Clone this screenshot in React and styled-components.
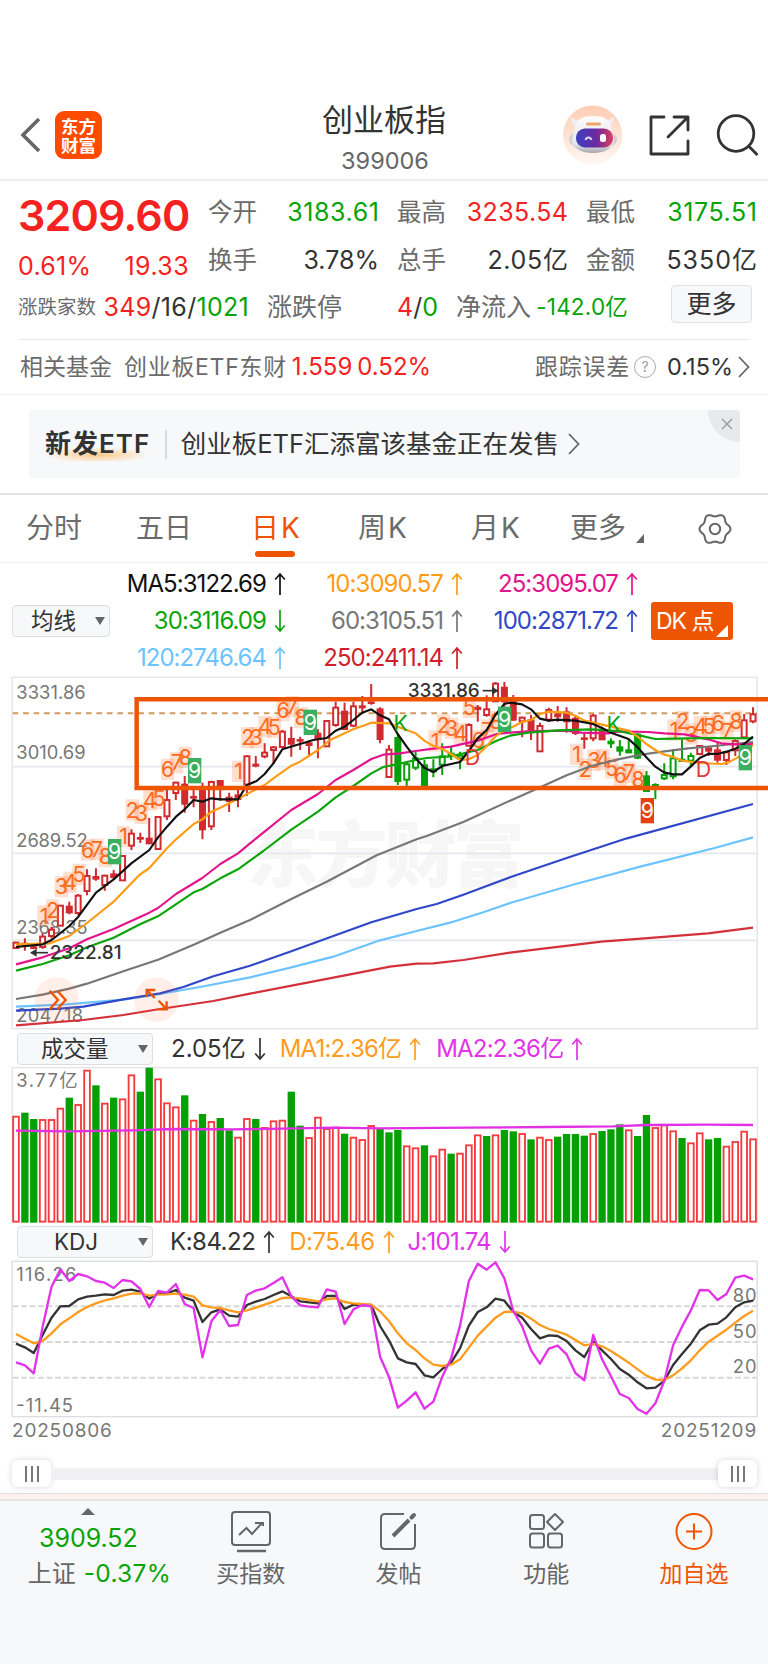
import React, { Component } from 'react';
import styled, { createGlobalStyle } from 'styled-components';

const GlobalStyle = createGlobalStyle`
  * { box-sizing: border-box; }
  html, body { margin: 0; padding: 0; background: #fff; }
  body {
    width: 768px;
    overflow-x: hidden;
    font-family: Inter, 'Noto Sans CJK SC', sans-serif;
    font-kerning: normal;
    color: #333;
  }
`;

const red = '#f62222';
const green = '#07a407';
const dark = '#333';
const grey = '#6b6b6b';
const orange = '#ee5503';

const Page = styled.div`
  width: 768px;
  height: 1664px;
  display: flex;
  flex-direction: column;
  overflow: hidden;
  background: #fff;
`;

const Text = styled.span`
  font-size: ${p => p.$size || 25}px;
  color: ${p => p.$color || dark};
  font-weight: ${p => p.$weight || 400};
  letter-spacing: ${p => p.$ls || 0}px;
  margin-left: ${p => p.$left || 0}px;
  margin-right: ${p => p.$right || 0}px;
  white-space: nowrap;
`;

/* header */
const Header = styled.header`
  height: 181px;
  padding: 74px 9px 0 20px;
  border-bottom: 2px solid #ededed;
  display: flex;
  justify-content: space-between;
`;

const HeaderSide = styled.div`
  width: 206px;
  height: 105px;
  padding-top: 17px;
  display: flex;
  align-items: center;
  justify-content: ${p => (p.$end ? 'flex-end' : 'flex-start')};
  gap: ${p => p.$gap}px;
`;

const Logo = styled.div`
  width: 47px;
  height: 48px;
  border-radius: 9px;
  background: #ff4a00;
  color: #fff;
  display: flex;
  flex-direction: column;
  align-items: center;
  justify-content: center;
  font-family: 'Noto Sans CJK SC', sans-serif;
  font-size: 17.5px;
  font-weight: 700;
  line-height: 19.5px;
`;

const TitleBlock = styled.div`
  display: flex;
  flex-direction: column;
  align-items: center;
  padding-top: 25px;
  line-height: 41px;
  margin-left: -11px;
`;

/* quote */
const Quote = styled.section`
  height: 158px;
  padding: 7px 0 0 19px;
`;

const QuoteGrid = styled.div`
  display: grid;
  grid-template-columns: repeat(4, 170px);
  grid-template-rows: 48px 48px;
  column-gap: 19px;
  line-height: 48px;
`;

const Price = styled.div`
  grid-row: span 2;
  height: 96px;
  margin-left: -1px;
`;

const PriceNow = styled.div`
  height: 54px;
  line-height: 54px;
`;

const Pair = styled.div`
  display: flex;
  justify-content: space-between;
  width: ${p => (p.$width ? p.$width + 'px' : 'auto')};
`;

const QuoteRow = styled.div`
  display: flex;
  gap: 18px;
  height: 48px;
  line-height: 48px;
  margin: -1px 0 0 -1px;
`;

const MoreButton = styled.button`
  width: 81px;
  height: 38px;
  margin: 2px 0 0 26px;
  padding: 0;
  border: 1px solid #dfe1e8;
  border-radius: 4px;
  background: #f7f8fa;
  font-family: inherit;
  font-size: 25px;
  line-height: 34px;
  color: #333;
`;

const FundRow = styled.section`
  height: 55px;
  margin: 0 18px 0 20px;
  border-top: 1px solid #e8e8e8;
  display: flex;
  align-items: center;
  line-height: 54px;
`;

const FundRight = styled.div`
  margin-left: auto;
  display: flex;
  align-items: center;
`;

const Help = styled.span`
  width: 22px;
  height: 22px;
  margin: 0 11px 0 4px;
  border: 1.5px solid #aaa;
  border-radius: 50%;
  color: #999;
  font-size: 14px;
  line-height: 19px;
  text-align: center;
`;

/* banner */
const BannerWrap = styled.section`
  height: 101px;
  padding: 15px 28px 0 29px;
  border-top: 1px solid #f1f1f1;
  border-bottom: 2px solid #e4e4e6;
`;

const Banner = styled.div`
  height: 68px;
  border-radius: 4px;
  background: #f7f8fa;
  display: flex;
  align-items: center;
  padding-left: 16px;
  position: relative;
  line-height: 68px;
`;

const BannerTag = styled.span`
  font-size: 26px;
  font-weight: 600;
  letter-spacing: 1px;
  white-space: nowrap;
  line-height: 34px;
  background: radial-gradient(ellipse 52px 8px at 50% 28px, #ffc988 0%, rgba(255, 215, 160, 0) 100%);
`;

const Divider = styled.span`
  width: 1.5px;
  height: 29px;
  margin: 0 14px 0 15px;
  background: #d8dae0;
`;

const CloseCorner = styled.span`
  position: absolute;
  right: 0;
  top: 0;
  width: 32px;
  height: 32px;
  border-radius: 0 4px 0 32px;
  background: #e8e9eb;
  display: flex;
  align-items: center;
  justify-content: center;
  padding: 0 0 5px 6px;
`;

/* tabs */
const Tabs = styled.nav`
  height: 68px;
  border-bottom: 1px solid #f3f3f3;
  display: flex;
  padding-left: 26px;
`;

const Tab = styled.div`
  width: ${p => p.$width}px;
  font-size: 28px;
  line-height: 67px;
  color: ${p => (p.$active ? orange : grey)};
  white-space: nowrap;
  display: flex;
  gap: 2px;
  position: relative;
`;

const TabLine = styled.span`
  position: absolute;
  left: 4px;
  top: 56px;
  width: 40px;
  height: 6px;
  border-radius: 3px;
  background: ${orange};
`;

const TabCaret = styled.span`
  width: 0;
  height: 0;
  margin: 39px 0 0 8px;
  border-left: 8px solid transparent;
  border-bottom: 9px solid #666;
`;

/* moving averages */
const Averages = styled.section`
  height: 110px;
  display: flex;
  align-items: center;
  padding: 5px 0 0 12px;
`;

const AverageGrid = styled.div`
  width: 528px;
  margin-right: 13px;
  display: grid;
  grid-template-columns: 176px 177px 175px;
  grid-auto-rows: 37px;
`;

const Average = styled.div`
  display: flex;
  align-items: center;
  justify-content: flex-end;
  gap: 8px;
  line-height: 37px;
  color: ${p => p.$color};
  font-size: 24px;
  letter-spacing: -0.95px;
`;

const Picker = styled.div`
  width: ${p => p.$width}px;
  height: 32px;
  flex: none;
  border: 1px solid #dcdee4;
  border-radius: 4px;
  background: #f7f8fa;
  display: flex;
  align-items: center;
  justify-content: space-between;
  padding: 0 4px 0 ${p => p.$pad}px;
  font-size: 22.5px;
  line-height: 30px;
  color: ${dark};
`;

const PickerCaret = styled.span`
  width: 0;
  height: 0;
  border-left: 5px solid transparent;
  border-right: 5px solid transparent;
  border-top: 8px solid #666;
`;

const DkButton = styled.div`
  width: 82px;
  height: 38px;
  border-radius: 3px;
  background: ${orange};
  color: #fff;
  font-size: 23px;
  letter-spacing: -1px;
  line-height: 38px;
  padding-left: 5px;
  white-space: nowrap;
  position: relative;
  &::after {
    content: '';
    position: absolute;
    right: 5px;
    bottom: 3px;
    border-left: 12px solid transparent;
    border-bottom: 12px solid #fff;
  }
`;

const IndicatorRow = styled.div`
  height: ${p => p.$height}px;
  padding: 1px 0 0 17px;
  display: flex;
  align-items: center;
`;

const Indicator = styled.div`
  display: flex;
  align-items: center;
  gap: 8px;
  margin-left: ${p => p.$left}px;
  color: ${p => p.$color};
  font-size: 24px;
  line-height: 34px;
  letter-spacing: ${p => p.$ls || 0}px;
  white-space: nowrap;
`;

const Plot = styled.svg`
  display: block;
  flex: none;
`;

const Dates = styled.div`
  height: 41px;
  padding: 2px 11px 0 12px;
  display: flex;
  justify-content: space-between;
  line-height: 20px;
  font-size: 19px;
  letter-spacing: 0.8px;
  color: #777;
`;

const Slider = styled.div`
  height: 27px;
  margin: 0 11px 0 12px;
  display: flex;
  align-items: center;
`;

const Track = styled.div`
  flex: 1;
  height: 12px;
  background: #f1f1f3;
`;

const Handle = styled.div`
  width: 39px;
  height: 27px;
  border-radius: 6px;
  background: #fff;
  box-shadow: 0 0 6px rgba(0, 0, 0, 0.16);
  display: flex;
  align-items: center;
  justify-content: center;
  gap: 4px;
  i {
    width: 2px;
    height: 16px;
    background: #777;
  }
`;

/* footer */
const PinkStrip = styled.div`
  height: 8px;
  margin-top: 6px;
  border-top: 1px solid #dcdce2;
  border-bottom: 2px solid #e5e4e6;
  background: #fff0eb;
`;

const Footer = styled.footer`
  flex: 1;
  display: flex;
  background: #f7f8fa;
`;

const FooterIndex = styled.div`
  width: 177px;
  padding-top: 7px;
  display: flex;
  flex-direction: column;
  align-items: center;
  line-height: 35px;
`;

const FooterChange = styled.div`
  display: flex;
  gap: 8px;
  margin-left: 22px;
`;

const UpMark = styled.span`
  border-left: 7px solid transparent;
  border-right: 7px solid transparent;
  border-bottom: 7px solid #666;
  margin-bottom: 6px;
`;

const FooterItem = styled.div`
  width: 148px;
  padding-top: 8px;
  display: flex;
  flex-direction: column;
  align-items: center;
  font-size: 23px;
  line-height: 36px;
  color: ${p => p.$color || '#666'};
  svg { margin-bottom: 3px; }
`;

const Arrow = ({ down }) => (
  <svg width="12" height="24" viewBox="0 0 12 24" fill="none" stroke="currentColor" strokeWidth="1.7">
    <path d={down ? 'M6 1V22M1.2 16.5L6 22L10.8 16.5' : 'M6 23V2M1.2 7.5L6 2L10.8 7.5'} />
  </svg>
);

const Chevron = ({ gap }) => (
  <svg width={12 + gap} height="22" viewBox={`${-gap} 0 ${12 + gap} 22`} fill="none" stroke="#666" strokeWidth="1.8">
    <path d="M1 1L10.500 11L1 21" />
  </svg>
);

const Robot = () => (
  <svg width="60" height="60" viewBox="-1 0 60 60">
    <defs>
      <linearGradient id="halo" x1="0" y1="0" x2="0" y2="1">
        <stop offset="0" stopColor="#ffcdb2" />
        <stop offset="1" stopColor="#fff8f4" />
      </linearGradient>
      <linearGradient id="visor" x1="0" y1="0" x2="1" y2="0">
        <stop offset="0" stopColor="#3d3fc0" />
        <stop offset="0.55" stopColor="#6a2aa0" />
        <stop offset="1" stopColor="#e03c5c" />
      </linearGradient>
      <linearGradient id="shell" x1="0" y1="0" x2="0" y2="1">
        <stop offset="0" stopColor="#fdfdfe" />
        <stop offset="0.75" stopColor="#e6e5ec" />
        <stop offset="1" stopColor="#a9a6b0" />
      </linearGradient>
    </defs>
    <circle cx="29.500" cy="30" r="29.500" fill="url(#halo)" />
    <path d="M8 11Q7 20 14 21L17 15Q10 16 8 11Z M50 11Q52 20 45 21L42 15Q48 16 50 11Z" fill="#efeef3" />
    <rect x="6" y="28" width="48" height="13" rx="6.500" fill="#cfced8" />
    <path d="M11 26C12 15 18 11 30 11S48 15 49 26L51 34C51 44 41 48 30 48S9 44 9 34Z" fill="url(#shell)" />
    <rect x="23" y="17.500" width="15" height="3" rx="1.500" fill="#f0a56a" />
    <rect x="13" y="23.500" width="37" height="19" rx="9" fill="url(#visor)" />
    <path d="M22.500 35C23.500 31.500 27.500 31.500 28.500 35" fill="none" stroke="#d9d4f4" strokeWidth="2" />
    <rect x="37" y="29" width="6" height="8" rx="2.500" fill="#fff" />
  </svg>
);

// six-lobed outline of the settings icon
const gearPoints = Array.from({ length: 72 }, (_, i) => {
  const a = (i * 5 * Math.PI) / 180;
  const r = 14 + 1.5 * Math.cos(6 * a);
  return `${(16 + r * Math.cos(a)).toFixed(2)},${(34 + r * Math.sin(a)).toFixed(2)}`;
}).join(' ');

// chart geometry, three units to the pixel
const X0 = 48;
const STEP = 26.64;
const xAt = i => X0 + i * STEP;

// kind, high, body top, body bottom, low (capital = filled)
const candles = [
  ['r', 815, 817, 835, 835], ['R', 805, 820, 826, 842], ['R', 826, 831, 834, 838], ['r', 790, 799, 832, 836],
  ['r', 770, 778, 799, 806], ['r', 706, 706, 768, 768], ['R', 695, 709, 728, 733], ['r', 672, 676, 730, 735],
  ['r', 598, 617, 664, 676], ['R', 595, 620, 627, 632], ['r', 614, 616, 646, 662], ['R', 600, 612, 622, 630],
  ['r', 555, 557, 632, 632], ['r', 478, 490, 528, 540], ['R', 488, 503, 507, 519], ['R', 444, 505, 521, 522],
  ['r', 438, 440, 538, 538], ['r', 360, 389, 440, 450], ['r', 335, 337, 370, 390], ['R', 318, 343, 402, 428],
  ['R', 360, 380, 384, 412], ['R', 338, 350, 479, 508], ['r', 332, 335, 470, 480], ['R', 330, 332, 350, 392],
  ['R', 368, 382, 394, 426], ['R', 358, 375, 388, 412], ['r', 256, 258, 345, 378], ['R', 258, 283, 288, 292],
  ['r', 220, 247, 260, 265], ['r', 228, 231, 241, 282], ['r', 180, 184, 232, 234], ['R', 170, 206, 222, 260],
  ['R', 200, 209, 212, 240], ['r', 212, 219, 226, 260], ['R', 178, 190, 208, 265], ['r', 150, 152, 230, 230],
  ['r', 95, 112, 166, 170], ['R', 98, 124, 178, 178], ['r', 95, 108, 168, 172], ['R', 78, 108, 113, 128],
  ['R', 42, 96, 100, 104], ['R', 112, 117, 208, 220], ['r', 225, 238, 322, 322], ['G', 190, 203, 334, 345],
  ['g', 278, 282, 330, 348], ['g', 245, 264, 294, 300], ['G', 270, 285, 350, 350], ['G', 268, 297, 305, 322],
  ['g', 220, 258, 285, 315], ['G', 230, 250, 256, 270], ['g', 245, 256, 266, 298], ['r', 160, 164, 228, 230],
  ['R', 105, 112, 118, 155], ['r', 76, 117, 136, 140], ['r', 36, 40, 95, 95], ['R', 36, 52, 95, 110],
  ['R', 75, 95, 150, 152], ['r', 140, 142, 155, 202], ['R', 135, 150, 182, 210], ['r', 158, 167, 245, 246],
  ['r', 113, 119, 150, 156], ['R', 108, 132, 140, 155], ['R', 112, 126, 155, 188], ['R', 135, 145, 190, 195],
  ['R', 190, 204, 207, 236], ['r', 132, 136, 206, 214], ['R', 170, 178, 209, 210], ['G', 205, 214, 221, 234],
  ['G', 210, 231, 243, 257], ['g', 210, 240, 248, 250], ['G', 190, 193, 264, 268], ['G', 303, 318, 364, 364],
  ['G', 340, 344, 348, 388], ['g', 280, 314, 326, 330], ['g', 238, 264, 320, 328], ['G', 208, 268, 274, 276],
  ['g', 248, 257, 273, 290], ['r', 226, 227, 253, 256], ['R', 228, 234, 243, 258], ['R', 218, 240, 270, 278],
  ['r', 245, 246, 271, 285], ['r', 208, 212, 242, 258], ['r', 132, 150, 203, 205], ['r', 112, 132, 155, 160],
];

const averageLines = [
  ['#d3303a', '48,1066 250,1050 370,1035 480,1017 640,993 750,971 1000,923 1170,890 1250,881 1300,880 1390,870 1530,848 1804,815 1924,806 2124,790 2259,773'],
  ['#6cc3ff', '48,1010 200,1003 370,989 480,972 600,951 750,922 874,892 1000,860 1140,811 1250,783 1350,758 1450,727 1530,699 1724,643 1924,589 2144,534 2259,502'],
  ['#3048c8', '48,1022 180,1016 250,1010 370,988 480,970 550,951 640,919 750,887 874,844 1000,798 1114,757 1250,717 1310,702 1390,674 1530,622 1700,564 1881,505 2259,402'],
  ['#777', '48,987 128,974 208,956 261,941 370,904 474,869 581,824 661,788 750,750 874,687 980,635 1130,556 1250,508 1280,498 1390,456 1530,392 1564,377 1634,346 1700,316 1774,288 1854,268 1924,254 1994,244 2064,235 2144,228 2259,216'],
  ['#e3148c', '48,883 128,862 208,835 261,808 341,777 448,728 474,714 528,672 607,624 661,582 714,550 750,520 790,488 874,420 954,372 1007,330 1060,300 1114,267 1150,254 1200,250 1247,243 1300,236 1353,230 1433,212 1490,192 1530,188 1584,184 1700,182 1744,188 1824,190 1854,184 1944,186 1994,190 2054,193 2124,208 2164,220 2204,223 2259,222'],
  ['#0ba50b', '48,902 128,882 208,856 261,832 341,803 420,763 474,739 581,667 607,657 661,625 714,598 750,572 790,543 874,479 954,425 1007,382 1060,348 1114,310 1150,291 1200,281 1247,270 1280,264 1353,259 1433,240 1490,212 1530,197 1584,188 1674,181 1774,178 1854,183 1904,193 1966,207 2024,206 2124,204 2259,205'],
  ['#ff9c14', '48,823 150,820 208,798 261,759 341,695 394,640 418,615 448,594 501,535 528,508 581,462 607,448 634,425 661,413 714,386 750,367 794,345 820,325 874,287 900,275 954,240 990,210 1060,178 1114,158 1167,160 1193,170 1247,190 1273,212 1300,228 1327,237 1353,252 1380,270 1406,268 1433,255 1460,228 1486,200 1513,180 1539,170 1566,156 1593,150 1620,132 1646,125 1700,128 1726,137 1753,152 1833,170 1886,182 1913,200 1939,222 1966,240 1992,254 2019,260 2046,272 2099,279 2164,282 2184,278 2214,262 2232,240 2259,226'],
  ['#111', '48,831 128,823 155,810 208,768 235,740 288,668 341,628 394,580 448,540 474,502 501,470 528,440 554,418 581,390 607,395 634,385 661,388 714,388 741,345 770,333 794,312 820,280 847,238 900,222 940,210 980,204 1007,182 1034,170 1060,150 1087,128 1114,118 1140,136 1167,148 1193,192 1220,230 1247,265 1273,293 1300,306 1327,288 1380,276 1406,243 1433,205 1460,180 1486,135 1513,102 1530,98 1566,103 1593,118 1620,146 1646,152 1673,149 1726,152 1779,162 1806,174 1833,188 1886,207 1913,232 1939,262 1966,290 1992,307 2019,313 2046,313 2072,290 2099,264 2126,251 2152,252 2179,245 2206,236 2232,222 2259,200'],
];

// digit, centre x, centre y
const counts = [
  [1, 132, 738], [2, 158, 720], [3, 184, 650], [4, 210, 637], [5, 237, 613], [6, 263, 540], [7, 290, 538], [8, 316, 560],
  [1, 371, 500], [2, 397, 420], [3, 424, 430], [4, 450, 390], [5, 477, 385], [6, 503, 298], [7, 530, 278], [8, 556, 262],
  [1, 716, 304], [2, 743, 203], [3, 768, 203], [4, 795, 170], [5, 823, 172], [6, 849, 122], [7, 877, 110], [8, 903, 143],
  [1, 1305, 213], [2, 1330, 165], [3, 1355, 175], [4, 1381, 190], [5, 1408, 112], [6, 1435, 212], [7, 1462, 180], [8, 1488, 155],
  [1, 1730, 253], [2, 1756, 298], [3, 1782, 271], [4, 1809, 269], [5, 1835, 294], [6, 1861, 316], [7, 1887, 307], [8, 1914, 328],
  [1, 2022, 180], [2, 2048, 155], [3, 2074, 192], [4, 2101, 170], [5, 2127, 170], [6, 2154, 160], [7, 2181, 185], [8, 2208, 153],
];

const nines = [
  [344, 545, '#3cae5f'], [584, 302, '#3cae5f'], [931, 157, '#3cae5f'], [1514, 148, '#3cae5f'],
  [2236, 263, '#3cae5f'], [1942, 422, '#e4420f'],
];

const signals = [
  ['K', 1202, 162, green], ['K', 1841, 165, green], ['D', 1417, 262, '#e0363c'], ['D', 2110, 300, '#e0363c'],
];

const volumes =
  'r257 g248 g267 r267 r267 r233 g203 r222 r119 g166 r218 g203 r205 r133 g185 g113 r145 r217 r229 g196 r269 ' +
  'g252 r273 g264 g301 r320 r264 g267 r291 r271 r269 g185 g287 r321 r260 r294 r290 g311 r320 r327 r285 g297 ' +
  'g307 g300 r346 r352 g346 r376 r356 g371 r368 r343 r313 g318 r313 g300 g304 r309 g328 r320 r327 g320 g312 ' +
  'g312 g317 r309 g303 g298 g283 r298 g318 g255 r291 r283 r301 g324 r337 r307 g328 g324 r347 r333 r302 r325';

const kdj = {
  j: [412, 421, 445, 305, 185, 133, 168, 147, 154, 168, 173, 189, 165, 169, 192, 246, 198, 203, 177, 237, 249, 397, 289, 255, 303, 300, 210, 197, 190, 174, 157, 214, 241, 245, 247, 193, 200, 297, 253, 240, 244, 395, 455, 548, 527, 502, 551, 530, 455, 400, 302, 168, 116, 134, 112, 160, 258, 304, 376, 416, 371, 362, 388, 444, 466, 330, 403, 454, 507, 519, 552, 566, 535, 468, 361, 305, 256, 195, 196, 225, 207, 158, 152, 163],
  k: [356, 367, 384, 330, 278, 244, 243, 223, 215, 212, 208, 210, 197, 194, 200, 221, 205, 205, 195, 218, 227, 291, 262, 253, 272, 275, 240, 230, 222, 210, 199, 214, 229, 232, 235, 213, 213, 252, 239, 240, 240, 303, 346, 400, 412, 417, 451, 457, 432, 413, 370, 302, 261, 247, 221, 227, 261, 278, 312, 340, 331, 333, 348, 376, 396, 350, 376, 402, 432, 449, 472, 490, 488, 468, 420, 387, 356, 316, 299, 296, 277, 247, 232, 227],
  d: [327, 341, 355, 348, 325, 298, 280, 261, 246, 235, 226, 220, 212, 206, 205, 212, 209, 208, 206, 209, 215, 241, 247, 249, 256, 262, 256, 248, 239, 230, 219, 218, 220, 225, 229, 223, 220, 231, 235, 237, 239, 259, 288, 325, 355, 375, 400, 419, 423, 419, 403, 368, 332, 305, 278, 261, 260, 265, 281, 300, 312, 320, 329, 345, 361, 357, 364, 378, 395, 413, 433, 452, 464, 465, 451, 430, 406, 376, 350, 332, 314, 293, 273, 257],
};

const toPoints = ys => ys.map((y, i) => `${xAt(i)},${y}`).join(' ');

const AxisText = styled.text`
  font-size: 55px;
  fill: #777;
`;

const MarkText = styled.text`
  font-size: 64px;
  text-anchor: middle;
  fill: ${p => p.$color};
`;

const PeakText = styled.text`
  font-size: 57px;
  font-weight: 500;
  fill: #333;
`;

const Watermark = styled.text`
  font-size: 214px;
  font-weight: 900;
  fill: #f6f6f6;
`;

const Candle = ({ data, i }) => {
  const [kind, high, top, bottom, low] = data;
  const color = kind.toLowerCase() === 'r' ? '#cf2b30' : '#07a00a';
  const filled = kind === 'R' || kind === 'G';
  const x = xAt(i);
  return (
    <g stroke={color} strokeWidth="6">
      <path d={`M${x} ${high}V${top}M${x} ${bottom}V${low}`} />
      <rect x={x - 7.5} y={top + 1} width="15" height={Math.max(bottom - top - 2, 2)} fill={filled ? color : '#fff'} />
    </g>
  );
};

class PriceChart extends Component {
  render() {
    return (
      <Plot width="768" height="357" viewBox="0 9 2304 1071">
        <rect x="36.500" y="22" width="2235" height="1054" fill="none" stroke="#e3e3e6" strokeWidth="4" />
        <Watermark x="742" y="634" textLength="832">东方财富</Watermark>
        {[290, 550, 811].map(y => (
          <path key={y} d={`M38 ${y}H2270`} stroke="#e3e8ef" strokeWidth="5" />
        ))}
        <path d="M38 130H2270" stroke="#d09a5c" strokeWidth="6" strokeDasharray="17 14.400" />
        <AxisText x="49" y="88" textLength="208">3331.86</AxisText>
        <AxisText x="49" y="267" textLength="208">3010.69</AxisText>
        <AxisText x="49" y="530" textLength="214">2689.52</AxisText>
        <AxisText x="49" y="793" textLength="214">2368.35</AxisText>
        <AxisText x="49" y="1055" textLength="200">2047.18</AxisText>
        {candles.map((c, i) => (
          <Candle key={i} data={c} i={i} />
        ))}
        {counts.map(([n, x, y], i) => (
          <rect key={i} x={x - 20} y={y - 32} width="40" height="64" fill="#ff7a3c" fillOpacity="0.24" />
        ))}
        {counts.map(([n, x, y], i) => (
          <MarkText key={i} x={x} y={y + 23} $color="#ff6a1c">{n}</MarkText>
        ))}
        {averageLines.map(([color, points]) => (
          <polyline key={color} points={points} fill="none" stroke={color} strokeWidth="6.500" strokeLinejoin="round" />
        ))}
        {nines.map(([x, y, color]) => (
          <g key={x}>
            <rect x={x - 20} y={y - 38} width="40" height="76" fill={color} />
            <MarkText x={x} y={y + 23} $color="#fff">9</MarkText>
          </g>
        ))}
        {signals.map(([s, x, y, color]) => (
          <MarkText key={x} x={x} y={y + 22} $color={color}>{s}</MarkText>
        ))}
        <PeakText x="1223" y="82" textLength="216">3331.86</PeakText>
        <path d="M1448 62H1492" stroke="#333" strokeWidth="5" />
        <path d="M1476 50L1496 62L1476 74Z" fill="#333" />
        <PeakText x="149" y="868" textLength="216">2322.81</PeakText>
        <path d="M144 848H94" stroke="#333" strokeWidth="5" />
        <path d="M110 836L90 848L110 860Z" fill="#333" />
        <circle cx="170" cy="989" r="67" fill="#ff6a2a" fillOpacity="0.11" />
        <circle cx="470" cy="989" r="67" fill="#ff6a2a" fillOpacity="0.11" />
        <g fill="none" stroke={orange} strokeWidth="7">
          <path d="M149 962L174 990L149 1018M172 962L197 990L172 1018" />
          <path d="M440 982V960H466M440 960L464 984M500 994V1018H474M500 1018L476 992" />
        </g>
        <path d="M2304 88H410V354H2304" fill="none" stroke={orange} strokeWidth="13.500" />
      </Plot>
    );
  }
}

const VolumeChart = () => (
  <Plot width="768" height="158" viewBox="0 108 2304 474">
    <path d="M36.500 578V113H2272V578" fill="none" stroke="#e3e3e6" strokeWidth="4" />
    <AxisText x="49" y="171" textLength="184">3.77亿</AxisText>
    {volumes.split(' ').map((v, i) => {
      const y = Number(v.slice(1));
      return v[0] === 'g' ? (
        <rect key={i} x={xAt(i) - 11} y={y} width="22" height={578 - y} fill="#04a004" />
      ) : (
        <rect key={i} x={xAt(i) - 8.5} y={y + 3} width="17" height={572 - y} fill="#fff" stroke="#f5393c" strokeWidth="5.500" />
      );
    })}
    <polyline
      points="48,302 200,304 400,301 520,297 700,298 850,296 1000,293 1140,295 1400,293 1640,291 1840,289 1940,285 2120,284 2259,285"
      fill="none"
      stroke="#e22fe6"
      strokeWidth="7"
    />
  </Plot>
);

const KdjChart = () => (
  <Plot width="768" height="160" viewBox="0 102 2304 480">
    <rect x="36.500" y="109" width="2235" height="466" fill="none" stroke="#dcdde3" strokeWidth="4" />
    {[244, 351, 458].map(y => (
      <path key={y} d={`M38 ${y}H2270`} stroke="#d6d6d6" strokeWidth="6" strokeDasharray="17 8.500" />
    ))}
    <AxisText x="49" y="168" textLength="180">116.26</AxisText>
    <AxisText x="49" y="560" textLength="170">-11.45</AxisText>
    <AxisText x="2198" y="231" textLength="72">80</AxisText>
    <AxisText x="2198" y="338" textLength="72">50</AxisText>
    <AxisText x="2198" y="445" textLength="72">20</AxisText>
    <g fill="none" strokeWidth="7" strokeLinejoin="round">
      <polyline points={toPoints(kdj.k)} stroke="#333" />
      <polyline points={toPoints(kdj.d)} stroke="#ff9c1e" />
      <polyline points={toPoints(kdj.j)} stroke="#e233ea" />
    </g>
  </Plot>
);

const averages = [
  ['MA5:3122.69', '#111', false], ['10:3090.57', '#ff9c14', false], ['25:3095.07', '#e3148c', false],
  ['30:3116.09', '#0ba50b', true], ['60:3105.51', '#777', false], ['100:2871.72', '#3048c8', false],
  ['120:2746.64', '#6cc3ff', false], ['250:2411.14', '#cf1f2e', false],
];

class App extends Component {
  renderHeader() {
    return (
      <Header>
        <HeaderSide $gap={14}>
          <svg width="21" height="36" viewBox="0 0 21 36" fill="none" stroke="#666" strokeWidth="3.600">
            <path d="M19 2L3 18L19 34" />
          </svg>
          <Logo>
            <span>东方</span>
            <span>财富</span>
          </Logo>
        </HeaderSide>
        <TitleBlock>
          <Text $size={31}>创业板指</Text>
          <Text $size={23.5} $left={2} $color="#666">399006</Text>
        </TitleBlock>
        <HeaderSide $end $gap={26}>
          <Robot />
          <svg width="42" height="42" viewBox="0 0 42 42" fill="none" stroke="#333" strokeWidth="2.800" strokeLinejoin="round" strokeLinecap="round">
            <path d="M16 3H3V40H40V27M26 3H40V16M40 3L20 23" />
          </svg>
          <svg width="43" height="42" viewBox="0 0 43 42" fill="none" stroke="#333" strokeWidth="2.800">
            <circle cx="20" cy="19.500" r="17.800" />
            <path d="M32 31.500L41.500 41" />
          </svg>
        </HeaderSide>
      </Header>
    );
  }

  renderQuote() {
    const cell = (label, value, color, ls = 0) => (
      <Pair>
        <Text $color={grey} $size={24.5}>{label}</Text>
        <Text $color={color} $ls={ls} $right={-1 - ls}>{value}</Text>
      </Pair>
    );
    return (
      <Quote>
        <QuoteGrid>
          <Price>
            <PriceNow>
              <Text $size={43} $weight={600} $color={red} $ls={-0.8}>3209.60</Text>
            </PriceNow>
            <Pair>
              <Text $color={red} $ls={0.3}>0.61%</Text>
              <Text $color={red} $ls={0.4}>19.33</Text>
            </Pair>
          </Price>
          {cell('今开', '3183.61', green, 0.6)}
          {cell('最高', '3235.54', red, 0.4)}
          {cell('最低', '3175.51', green, 0.6)}
          {cell('换手', '3.78%', dark, 0)}
          {cell('总手', '2.05亿', dark, 0.7)}
          {cell('金额', '5350亿', dark, 1)}
        </QuoteGrid>
        <QuoteRow>
          <Pair $width={231}>
            <Text $size={19.5} $color={grey}>涨跌家数</Text>
            <Text $ls={0.3}>
              <Text $color={red} $ls={0.3}>349</Text>/16/<Text $color={green} $ls={0.3}>1021</Text>
            </Text>
          </Pair>
          <Pair $width={171}>
            <Text $size={25} $color={grey}>涨跌停</Text>
            <Text>
              <Text $color={red}>4</Text>/<Text $color={green}>0</Text>
            </Text>
          </Pair>
          <Pair $width={171}>
            <Text $size={25} $color={grey}>净流入</Text>
            <Text $size={22.5} $color={green} $ls={0.2} $right={-1}>-142.0亿</Text>
          </Pair>
          <MoreButton>更多</MoreButton>
        </QuoteRow>
      </Quote>
    );
  }

  renderAverages() {
    return (
      <Averages>
        <Picker $width={98} $pad={18}>
          均线
          <PickerCaret />
        </Picker>
        <AverageGrid>
          {averages.map(([text, color, down]) => (
            <Average key={text} $color={color}>
              {text}
              <Arrow down={down} />
            </Average>
          ))}
        </AverageGrid>
        <DkButton>DK 点</DkButton>
      </Averages>
    );
  }

  renderFooter() {
    return (
      <Footer>
        <FooterIndex>
          <UpMark />
          <Text $size={25} $color={green}>3909.52</Text>
          <FooterChange>
            <Text $size={24} $color="#666">上证</Text>
            <Text $size={24.5} $color={green} $ls={0.3}>-0.37%</Text>
          </FooterChange>
        </FooterIndex>
        <FooterItem>
          <svg width="40" height="44" viewBox="0 0 40 44" fill="none" stroke="#666" strokeWidth="2">
            <rect x="1" y="3" width="38" height="33" rx="3" />
            <path d="M6 42H35" strokeWidth="2.500" />
            <path d="M8 26L15.500 19L21 25L31 14M24 14H32V17" />
          </svg>
          买指数
        </FooterItem>
        <FooterItem>
          <svg width="40" height="44" viewBox="0 0 40 44" fill="none" stroke="#666" strokeWidth="2">
            <path d="M26 5H7Q3 5 3 9V36Q3 40 7 40H33Q37 40 37 36V15" />
            <path d="M15 27L31 11" strokeWidth="4" />
            <path d="M33.500 8.500L36 6" strokeWidth="4" strokeLinecap="round" />
          </svg>
          发帖
        </FooterItem>
        <FooterItem>
          <svg width="40" height="44" viewBox="0 0 40 44" fill="none" stroke="#666" strokeWidth="2">
            <rect x="4" y="6" width="14" height="14" rx="2.500" />
            <rect x="4" y="24.500" width="14" height="14" rx="2.500" />
            <rect x="22" y="24.500" width="14" height="14" rx="2.500" />
            <path d="M29 5L37 13L29 21L21 13Z" strokeLinejoin="round" />
          </svg>
          功能
        </FooterItem>
        <FooterItem $color={orange}>
          <svg width="40" height="44" viewBox="0 0 40 44" fill="none" stroke={orange} strokeWidth="2">
            <circle cx="20" cy="22.500" r="17.500" />
            <path d="M12 22.500H28M20 14.500V30.500" />
          </svg>
          加自选
        </FooterItem>
      </Footer>
    );
  }

  render() {
    return (
      <Page>
        <GlobalStyle />
        {this.renderHeader()}
        {this.renderQuote()}
        <FundRow>
          <Text $size={23} $color={grey}>相关基金</Text>
          <Text $size={23} $color={grey} $left={12} $ls={0.7}>创业板ETF东财</Text>
          <Text $size={24} $color={red} $left={5}>1.559</Text>
          <Text $size={24} $color={red} $left={5}>0.52%</Text>
          <FundRight>
            <Text $size={23} $color={grey} $ls={0.8}>跟踪误差</Text>
            <Help>?</Help>
            <Text $size={23.5}>0.15%</Text>
            <Chevron gap={5} />
          </FundRight>
        </FundRow>
        <BannerWrap>
          <Banner>
            <BannerTag>新发ETF</BannerTag>
            <Divider />
            <Text $size={25.5}>创业板ETF汇添富该基金正在发售</Text>
            <Chevron gap={9} />
            <CloseCorner>
              <svg width="12" height="12" viewBox="0 0 12 12" stroke="#999" strokeWidth="1.400">
                <path d="M1 1L11 11M11 1L1 11" />
              </svg>
            </CloseCorner>
          </Banner>
        </BannerWrap>
        <Tabs>
          <Tab $width={110}>分时</Tab>
          <Tab $width={115}>五日</Tab>
          <Tab $width={107} $active>
            <span>日</span>
            <span>K</span>
            <TabLine />
          </Tab>
          <Tab $width={113}>
            <span>周</span>
            <span>K</span>
          </Tab>
          <Tab $width={99}>
            <span>月</span>
            <span>K</span>
          </Tab>
          <Tab $width={128}>
            更多
            <TabCaret />
          </Tab>
          <svg width="34" height="67" viewBox="-1 0 34 67" fill="none" stroke="#666" strokeWidth="2" strokeLinejoin="round">
            <polygon points={gearPoints} />
            <circle cx="16" cy="34" r="5.200" />
          </svg>
        </Tabs>
        {this.renderAverages()}
        <PriceChart />
        <IndicatorRow $height={36}>
          <Picker $width={136} $pad={23}>
            成交量
            <PickerCaret />
          </Picker>
          <Indicator $left={18} $color={dark}>2.05亿<Arrow down /></Indicator>
          <Indicator $left={14} $color="#ff9c1e" $ls={-0.8}>MA1:2.36亿<Arrow /></Indicator>
          <Indicator $left={15} $color="#e233ea" $ls={-0.8}>MA2:2.36亿<Arrow /></Indicator>
        </IndicatorRow>
        <VolumeChart />
        <IndicatorRow $height={35}>
          <Picker $width={136} $pad={36}>
            KDJ
            <PickerCaret />
          </Picker>
          <Indicator $left={17} $color={dark} $ls={-0.5}>K:84.22<Arrow /></Indicator>
          <Indicator $left={14} $color="#ff9c1e" $ls={-0.5}>D:75.46<Arrow /></Indicator>
          <Indicator $left={13} $color="#e233ea" $ls={-0.8}>J:101.74<Arrow down /></Indicator>
        </IndicatorRow>
        <KdjChart />
        <Dates>
          <span>20250806</span>
          <span>20251209</span>
        </Dates>
        <Slider>
          <Handle><i /><i /><i /></Handle>
          <Track />
          <Handle><i /><i /><i /></Handle>
        </Slider>
        <PinkStrip />
        {this.renderFooter()}
      </Page>
    );
  }
}

export default App;
